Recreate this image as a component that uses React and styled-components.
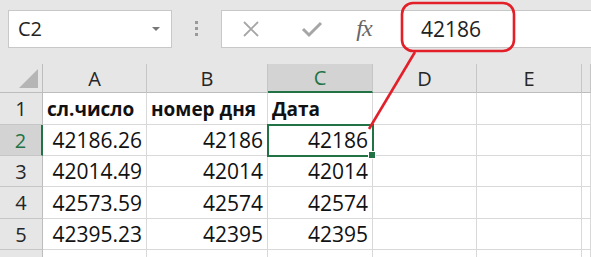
import React from "react";
import styled, { createGlobalStyle } from "styled-components";

const GlobalStyle = createGlobalStyle`
  html, body { margin: 0; padding: 0; background: #fff; }
  body { font-family: "Open Sans", "Liberation Sans", sans-serif; overflow: hidden; }
`;

const COLS = ["A", "B", "C", "D", "E", ""];
const ROWS = [
  ["сл.число", "номер дня", "Дата"],
  ["42186.26", "42186", "42186"],
  ["42014.49", "42014", "42014"],
  ["42573.59", "42574", "42574"],
  ["42395.23", "42395", "42395"],
  ["", "", ""],
];

const Screen = styled.div`
  position: relative;
  width: 591px;
  height: 257px;
  overflow: hidden;
  background: #e6e6e6;
`;

const Toolbar = styled.div`
  display: flex;
  align-items: center;
  height: 64px;
  padding: 0 0 7px 8px;
  box-sizing: border-box;
`;

const NameBox = styled.div`
  display: flex;
  align-items: center;
  justify-content: space-between;
  width: 164px;
  height: 38px;
  box-sizing: border-box;
  background: #fff;
  border: 1px solid #c8c8c8;
  padding: 0 11px 0 9px;
  font-size: 20px;
  color: #222;
`;

const Caret = styled.span`
  width: 0;
  height: 0;
  border-left: 4px solid transparent;
  border-right: 4px solid transparent;
  border-top: 4px solid #777;
`;

const Grip = styled.div`
  display: flex;
  flex-direction: column;
  gap: 3px;
  margin: 0 23px 0 23px;
  span {
    width: 3px;
    height: 3px;
    background: #9a9a9a;
  }
`;

const FormulaBar = styled.div`
  flex: 1;
  display: flex;
  align-items: center;
  height: 38px;
  box-sizing: border-box;
  background: #fff;
  border: 1px solid #c8c8c8;
  border-right: none;
`;

const ToolIcon = styled.span`
  display: flex;
  align-items: center;
  justify-content: center;
  width: ${(p) => p.$w}px;
  color: #a6a6a6;
`;

const Fx = styled.span`
  width: 40px;
  text-align: center;
  font-family: "Liberation Serif", serif;
  font-style: italic;
  font-size: 24px;
  color: #666;
  letter-spacing: -1px;
`;

const FormulaText = styled.span`
  margin-left: 37px;
  font-size: 21px;
  color: #222;
`;

const Grid = styled.div`
  display: grid;
  grid-template-columns: 43px 104px 121px 105px 104px 105px 1fr;
  grid-template-rows: 29px 32px 31px 31px 32px 31px 31px;
  background: #fff;
`;

const Corner = styled.div`
  position: relative;
  background: #e6e6e6;
  border-right: 1px solid #bdbdbd;
  border-bottom: 1px solid #bdbdbd;
  box-sizing: border-box;
  &::after {
    content: "";
    position: absolute;
    right: 4px;
    bottom: 4px;
    border-left: 19px solid transparent;
    border-bottom: 19px solid #b5b5b5;
  }
`;

const ColHead = styled.div`
  display: flex;
  align-items: center;
  justify-content: center;
  box-sizing: border-box;
  font-size: 20px;
  background: ${(p) => (p.$active ? "#d3d3d3" : "#e6e6e6")};
  color: ${(p) => (p.$active ? "#217346" : "#262626")};
  border-right: 1px solid #c6c6c6;
  border-bottom: ${(p) => (p.$active ? "2px solid #217346" : "1px solid #bdbdbd")};
`;

const RowHead = styled.div`
  display: flex;
  align-items: center;
  justify-content: center;
  box-sizing: border-box;
  font-size: 20px;
  background: ${(p) => (p.$active ? "#d3d3d3" : "#e6e6e6")};
  color: ${(p) => (p.$active ? "#217346" : "#262626")};
  border-bottom: 1px solid #c6c6c6;
  border-right: ${(p) => (p.$active ? "2px solid #217346" : "1px solid #bdbdbd")};
`;

const Cell = styled.div`
  position: relative;
  display: flex;
  align-items: center;
  justify-content: ${(p) => (p.$bold ? "flex-start" : "flex-end")};
  padding: 0 4px 0 4px;
  box-sizing: border-box;
  font-size: ${(p) => (p.$bold ? 19 : 21)}px;
  font-weight: ${(p) => (p.$bold ? 700 : 400)};
  color: #111;
  white-space: nowrap;
  border-right: 1px solid #d9d9d9;
  border-bottom: 1px solid #d9d9d9;
  ${(p) =>
    p.$selected &&
    `
    outline: 2px solid #217346;
    outline-offset: -1px;
    z-index: 1;
    &::after {
      content: "";
      position: absolute;
      right: -4px;
      bottom: -4px;
      width: 6px;
      height: 6px;
      background: #217346;
      border: 1px solid #fff;
    }
  `}
`;

const Callout = styled.svg`
  position: absolute;
  left: 0;
  top: 0;
  pointer-events: none;
  z-index: 5;
`;

export default function App() {
  return (
    <>
      <GlobalStyle />
      <Screen>
        <Toolbar>
          <NameBox>
            C2
            <Caret />
          </NameBox>
          <Grip>
            <span />
            <span />
            <span />
          </Grip>
          <FormulaBar>
            <ToolIcon $w={58}>
              <svg width="18" height="18" viewBox="0 0 18 18">
                <path d="M2 2 L16 16 M16 2 L2 16" stroke="currentColor" strokeWidth="1.8" />
              </svg>
            </ToolIcon>
            <ToolIcon $w={64}>
              <svg width="22" height="18" viewBox="0 0 22 18">
                <path d="M2 9 L8 15 L20 3" stroke="currentColor" strokeWidth="3" fill="none" />
              </svg>
            </ToolIcon>
            <Fx>fx</Fx>
            <FormulaText>42186</FormulaText>
          </FormulaBar>
        </Toolbar>
        <Grid>
          <Corner />
          {COLS.map((c, i) => (
            <ColHead key={i} $active={c === "C"}>
              {c}
            </ColHead>
          ))}
          {ROWS.map((row, r) => (
            <React.Fragment key={r}>
              <RowHead $active={r === 1}>{r < 5 ? r + 1 : ""}</RowHead>
              {row.map((v, c) => (
                <Cell key={c} $bold={r === 0} $selected={r === 1 && c === 2}>
                  {v}
                </Cell>
              ))}
              <Cell />
              <Cell />
              <Cell />
            </React.Fragment>
          ))}
        </Grid>
        <Callout width="591" height="257" viewBox="0 0 591 257">
          <rect x="402" y="3" width="112" height="48" rx="11" fill="none" stroke="#e3202a" strokeWidth="2.6" />
          <line x1="415" y1="52" x2="369" y2="129" stroke="#e3202a" strokeWidth="2.6" />
        </Callout>
      </Screen>
    </>
  );
}
